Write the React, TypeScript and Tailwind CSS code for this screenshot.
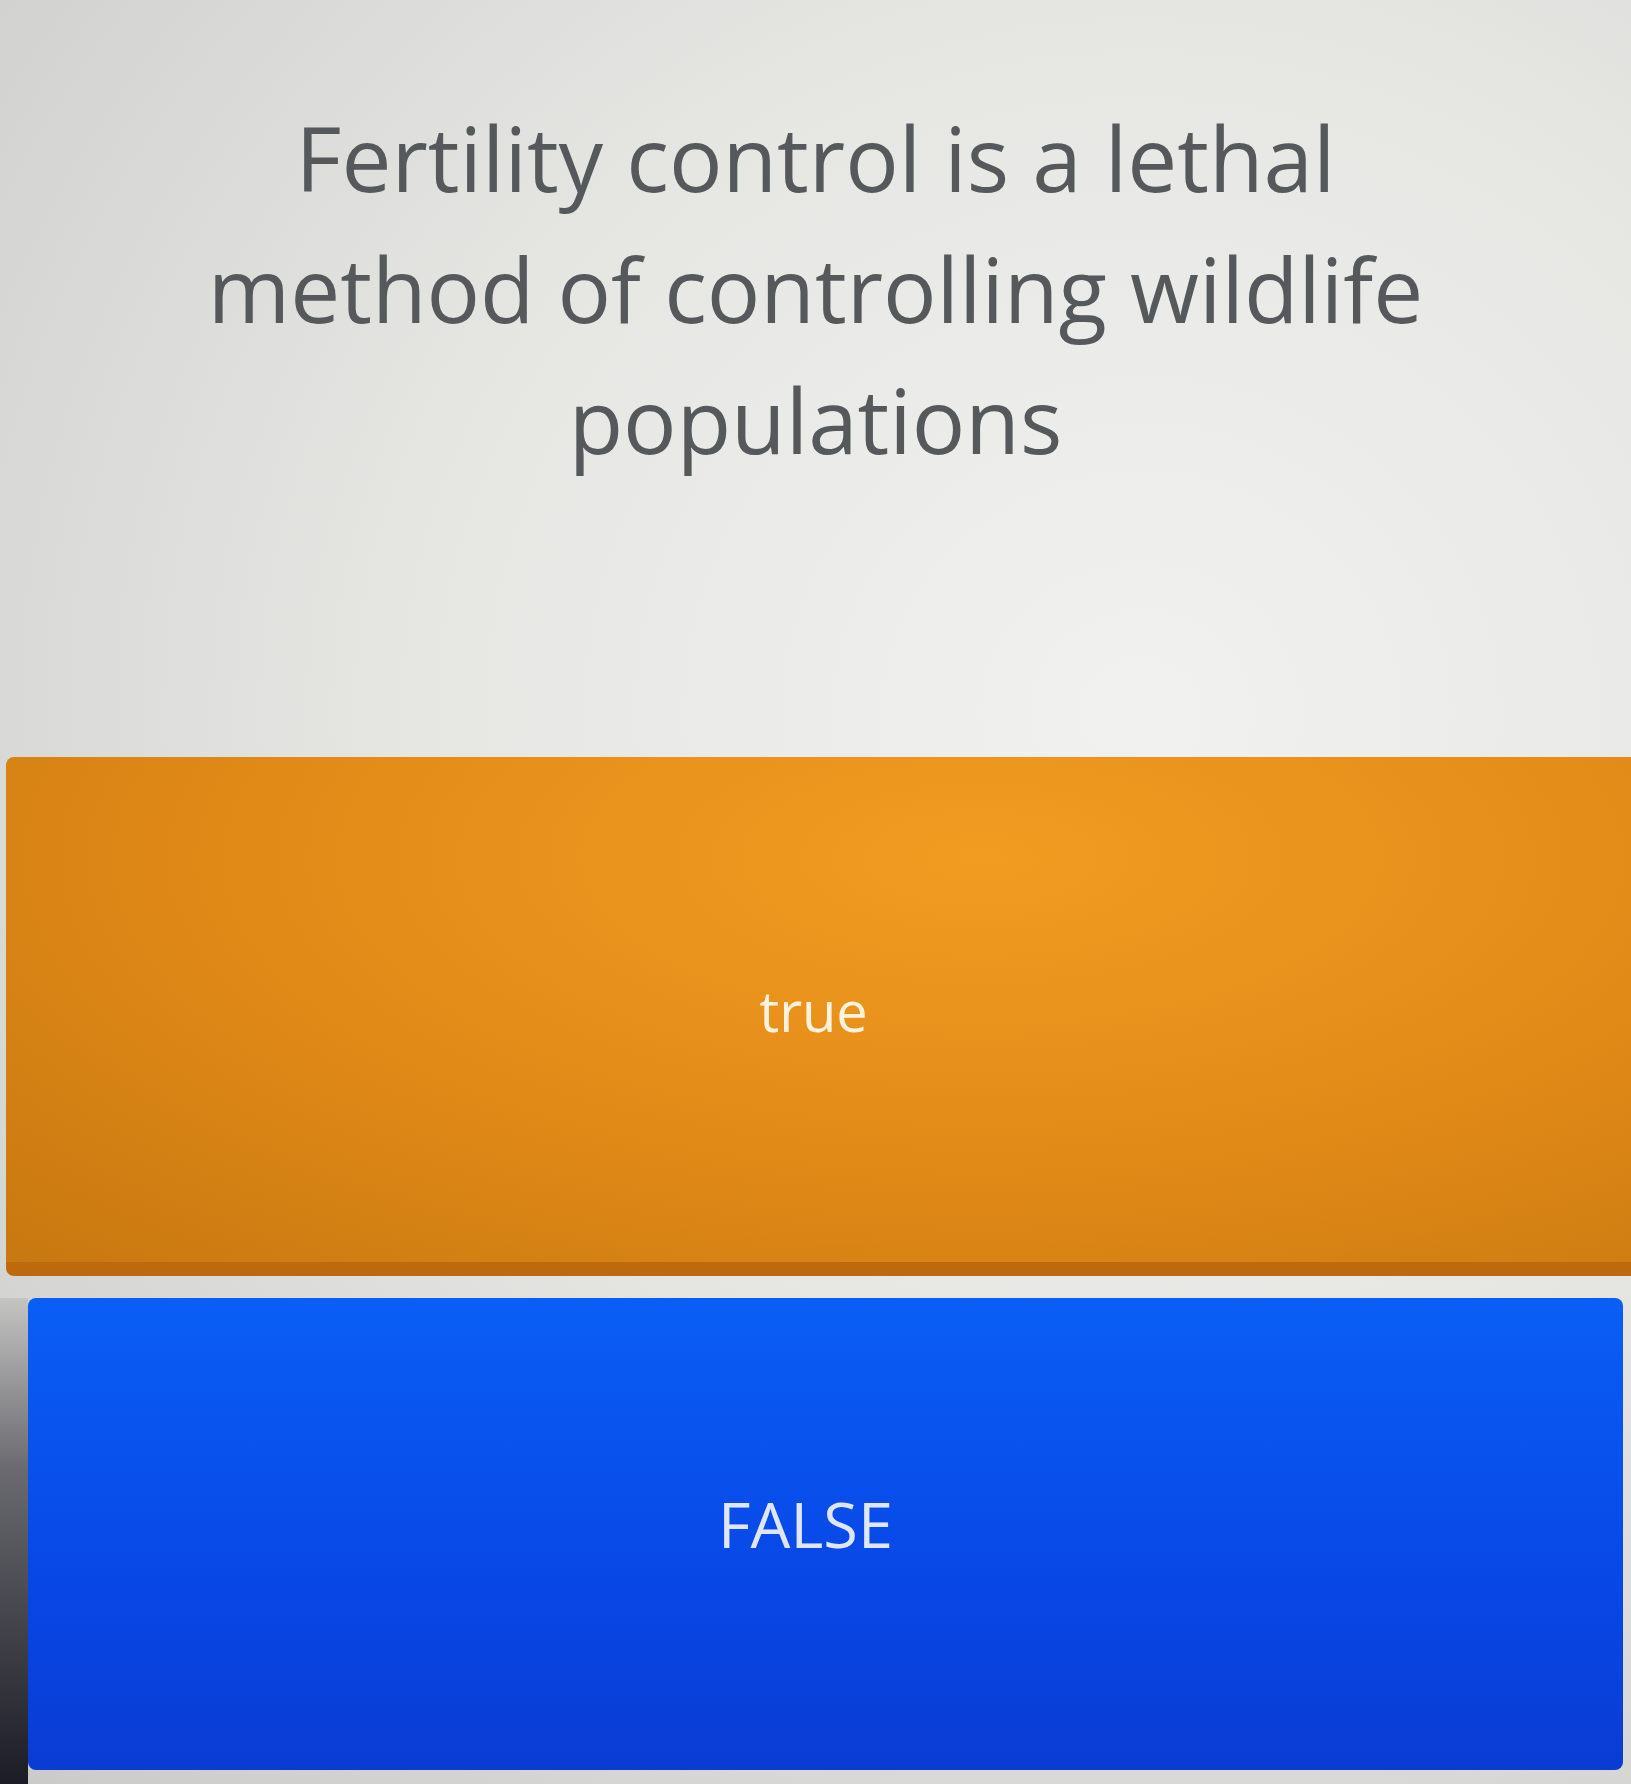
export default function App() {
  return (
    <div
      className="w-full h-[1784px] flex flex-col bg-[radial-gradient(ellipse_at_70%_40%,#f1f1ef_0%,#e6e6e3_45%,#cacac8_100%)]"
      style={{ fontFamily: '"Open Sans", "Noto Sans", sans-serif' }}
    >
      {/* Question */}
      <div className="h-[757px] pt-[92px] flex flex-col items-center text-[#55595c] text-[89px] leading-[131px]">
        <span>Fertility control is a lethal</span>
        <span>method of controlling wildlife</span>
        <span>populations</span>
      </div>

      {/* Answers */}
      <button className="ml-[6px] h-[519px] rounded-l-[8px] border-b-[14px] border-[#bf690e] bg-[radial-gradient(ellipse_at_60%_20%,#f29c22_0%,#e38b18_50%,#c77810_100%)] text-[#fff3e0] text-[56px] font-medium flex items-center justify-center pr-[10px]">
        true
      </button>

      <div className="flex-1 flex mt-[22px] bg-[linear-gradient(to_right,transparent_0px,transparent_28px,transparent_28px)]">
        <div className="w-[28px] bg-[linear-gradient(to_bottom,#c4c4c2_0%,#6a6a70_35%,#1c1c26_100%)]" />
        <button className="flex-1 mr-[8px] mb-[14px] rounded-[8px] bg-[linear-gradient(to_bottom,#0a5ef6_0%,#0847e6_60%,#0a3cd3_100%)] text-[#dfe6f7] text-[63px] flex items-center justify-center pb-[20px] pr-[40px]">
          FALSE
        </button>
      </div>
    </div>
  );
}
